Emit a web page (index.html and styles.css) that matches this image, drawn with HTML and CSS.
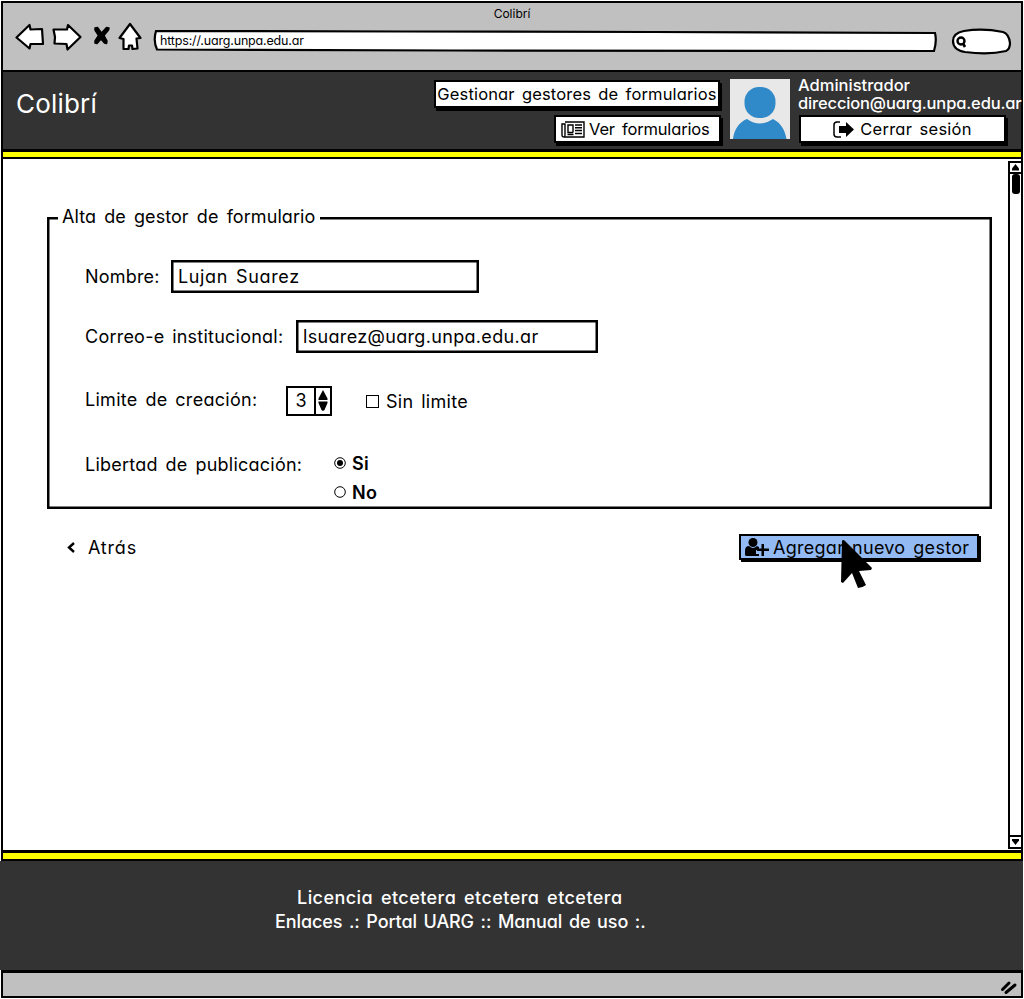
FILE: index.html
```html
<!DOCTYPE html>
<html lang="es">
<head>
<meta charset="utf-8">
<title>Colibrí</title>
<link rel="stylesheet" href="styles.css">
</head>
<body>
<div class="window">
  <div class="chrome">
    <div class="window-title"><span>Colibrí</span></div>
    <div class="toolbar">
      <svg class="nav-icons" width="128" height="30" viewBox="15 22 128 30" fill="#fff" stroke="#000" stroke-width="2.200" stroke-linejoin="round">
        <path d="M16.500 37.500L29.500 25L30.500 29.500L42 29L43 44L30.500 44L29.500 48.500Z"/>
        <path d="M53.500 29.500L67 29.500L68 25L80.500 37L67.500 49.500L66.500 44L54.500 43.500L55 37Z"/>
        <path d="M95 28L97.500 27.500L101.500 33L106.500 27.500L109 28L108.500 30L104 35.500L107 41L106.500 43.500L104.500 43L101 39L97 43.500L95 43L95 41L98.500 35.500L95 30Z" fill="#000" stroke-width="1.500"/>
        <path d="M130 24L140.500 38L136.500 38.500L137.500 48.500L132.500 49L132 45.500L129 45.500L128.500 49L123.500 49L123.500 39L119.500 38Z"/>
      </svg>
      <div class="address">
        <svg class="address-shape" width="785" height="24" viewBox="0 0 785 24" fill="#fff" stroke="#000" stroke-width="2.200"><path d="M3 2L250 2.500L500 3L782 4Q784 12 781 22L300 21.500L4 20.500Q0 12 3 2Z"/></svg>
        <span class="address-text">https://.uarg.unpa.edu.ar</span>
      </div>
      <svg class="search" width="62" height="27" viewBox="0 0 62 27" fill="#fff" stroke="#000" stroke-width="2.200">
        <path d="M13 3Q32 0 52 4Q58 6 59 15Q59 21 55 23Q38 27 14 24Q2 22 2 13Q2 5 13 3Z"/>
        <circle cx="10" cy="13" r="3.500" stroke-width="2.400"/><path d="M12 15.500L14 19" stroke-width="2.600"/>
      </svg>
    </div>
  </div>

  <header class="header">
    <h1 class="logo">Colibrí</h1>
    <nav class="nav">
      <a class="button button-manage"><span>Gestionar gestores de formularios</span></a>
      <a class="button button-forms">
        <svg width="24" height="17" viewBox="0 0 24 17" fill="none" stroke="#000" stroke-width="1.400"><path d="M4 1H23V16H3Q1 16 1 14V3H4V14Q4 16 3 16M12 11.500H7V4H12V11.500M14 4H21M14 6.800H21M14 9.500H21M6.500 13.500H12.500M14 12.500H21"/></svg>
        <span>Ver formularios</span>
      </a>
    </nav>
    <svg class="avatar" width="60" height="60" viewBox="0 0 60 60"><path fill="#e8e8e8" d="M0 0H60V60H0Z"/><rect x="14.500" y="8" width="31" height="31" rx="14.500" fill="#3089c9"/><path fill="#3089c9" d="M3 60C4 51 9 43 17 40Q30 49 43 40C51 44 55 51 56.500 60Z"/></svg>
    <div class="account">
      <div class="role">Administrador</div>
      <div class="mail">direccion@uarg.unpa.edu.ar</div>
      <a class="button button-exit">
        <svg width="22" height="17" viewBox="0 0 22 17"><path d="M7 1H4Q1 1 1 4V13Q1 16 4 16H8" fill="none" stroke="#000" stroke-width="1.500"/><path d="M6 5H13V1L21 8.500L13 16V12H6Z"/></svg>
        <span>Cerrar sesión</span>
      </a>
    </div>
  </header>
  <div class="stripe"></div>

  <div class="page">
    <main class="content">
      <section class="group">
        <h2 class="legend"><span>Alta de gestor de formulario</span></h2>
        <div class="row row-name"><label class="t-name">Nombre:</label><div class="field field-name"><span>Lujan Suarez</span></div></div>
        <div class="row row-mail"><label class="t-mail">Correo-e institucional:</label><div class="field field-mail"><span>lsuarez@uarg.unpa.edu.ar</span></div></div>
        <div class="row row-limit">
          <label class="t-limit">Limite de creación:</label>
          <div class="spinner"><span class="spinner-value">3</span><svg width="14" height="25" viewBox="0 0 14 25"><path d="M7 2L11.500 10.500V12H2.500V10.500ZM2.500 13.500H11.500V15L8.500 22L7 23L5.500 22L2.500 15Z"/></svg></div>
          <span class="checkbox"></span><span class="t-free">Sin limite</span>
        </div>
        <div class="row row-publish">
          <label class="t-publish">Libertad de publicación:</label>
          <div class="radios">
            <div class="radio"><svg width="12" height="12" viewBox="0 0 12 12"><circle cx="6" cy="6" r="5.300" fill="none" stroke="#000"/><circle cx="6" cy="6" r="3"/></svg><b>Si</b></div>
            <div class="radio"><svg width="12" height="12" viewBox="0 0 12 12"><circle cx="6" cy="6" r="5.300" fill="none" stroke="#000"/></svg><b>No</b></div>
          </div>
        </div>
      </section>
      <div class="actions">
        <a class="back"><svg width="8" height="11" viewBox="0 0 8 11" fill="none" stroke="#000" stroke-width="2.400"><path d="M7 1L2 5.500L7 10"/></svg><span>Atrás</span></a>
        <a class="button button-add">
          <svg width="26" height="20" viewBox="0 0 26 20"><circle cx="9" cy="5.500" r="4.500"/><path d="M1 18V14Q1 9 5 9Q9 13 13 9L15 10V13H12V17H15V19H3Q1 19 1 18ZM17.500 7H20V11.500H25V14H20V19H17.500V14H13V11.500H17.500Z"/></svg>
          <span>Agregar nuevo gestor</span>
          <svg class="pointer" width="34" height="50" viewBox="0 0 34 50"><path d="M2 2Q3 0 5 2L32 29L31 31L19 32L26 46Q22 49 18 49L12 34L3 44L1 43Z"/></svg>
        </a>
      </div>
    </main>
    <div class="scrollbar">
      <svg class="scroll-arrow" width="13" height="9" viewBox="0 0 13 9"><path d="M6.500 1L10 5.500V7.500H3V5.500Z"/></svg>
      <div class="track"><div class="thumb"></div></div>
      <svg class="scroll-arrow" width="13" height="10" viewBox="0 0 13 10"><path d="M3 2H10V3.500L6.500 8L3 3.500Z"/></svg>
    </div>
  </div>

  <div class="stripe stripe-bottom"></div>
  <footer class="footer">
    <p class="license">Licencia etcetera etcetera etcetera</p>
    <p class="links">Enlaces .: Portal UARG :: Manual de uso :.</p>
  </footer>
  <div class="status"><svg width="18" height="16" viewBox="0 0 18 16" stroke="#000" stroke-width="3" stroke-linecap="round"><path d="M2.500 9.500L9 3M6 12.500L15 5"/></svg></div>
</div>
</body>
</html>
```
FILE: styles.css
```css
* { box-sizing: border-box; }
body { margin: 0; background: #fff; color: #000; font: 18px/20px Inter, "Open Sans", sans-serif; font-feature-settings: "cv11" 1; overflow: hidden; }
h1, h2, p { margin: 0; font-weight: 400; }
svg { display: block; flex: none; }
span, label, b, .role, .mail { white-space: nowrap; }

.window { width: 1022px; height: 997px; margin: 1px; border: 2px solid #000; display: flex; flex-direction: column; }
.chrome { height: 69px; flex: none; background: #c0c0c0; border-bottom: 2px solid #000; }
.window-title { height: 19px; padding-top: 2px; display: flex; justify-content: center; font-size: 12px; line-height: 18px; }
.toolbar { display: flex; align-items: flex-start; }
.nav-icons { margin-left: 12px; }
.address { display: grid; margin: 7px 0 0 10px; width: 785px; }
.address > * { grid-area: 1 / 1; }
.address-text { padding: 2px 0 0 7px; font-size: 12.500px; line-height: 20px; letter-spacing: -0.170px; }
.search { margin: 6px 0 0 13px; }

.header { height: 77px; flex: none; background: #333; display: flex; align-items: flex-start; padding-top: 7px; }
.logo { flex: 1; padding: 11px 0 0 13px; font-size: 26px; line-height: 28px; color: #fff; letter-spacing: 0.200px; }
.nav { display: flex; flex-direction: column; align-items: flex-end; gap: 7px; padding-top: 1px; width: 287px; }
.button { display: flex; align-items: center; justify-content: center; height: 28px; border: 2px solid #000; background: #fff; box-shadow: 2px 3px 0 #000; }
.header .button { font-size: 16.500px; word-spacing: 2.500px; }
.button-manage { width: 286px; margin-right: 1px; letter-spacing: 0.150px; }
.button-forms { width: 167px; justify-content: flex-start; padding-left: 5px; gap: 4px; letter-spacing: -0.150px; }
.avatar { margin-left: 9px; }
.account { width: 223px; margin: -3px 0 0 8px; color: #fff; font-size: 16.500px; font-weight: 500; line-height: 18px; }
.mail { letter-spacing: -0.150px; }
.button-exit { width: 207px; margin: 3px 0 0 1px; gap: 5px; color: #000; font-weight: 400; letter-spacing: 0.250px; }

.stripe { flex: none; height: 10px; background: #ff0; border: solid #000; border-width: 3px 0 2px; }
.stripe-bottom { height: 11px; }
.page { flex: 1; display: flex; min-height: 0; }
.content { flex: 1; padding: 58px 15px 0 44px; }
.group { width: 945px; height: 292px; border: 2px solid #000; box-shadow: inset 0 0 0 0.500px #000; }
.legend { margin: -12px 0 0 9px; font-size: 18px; line-height: 20px; word-spacing: 3px; letter-spacing: 0.070px; }
.legend span { display: inline-block; width: 262px; padding-left: 4px; background: #fff; }
.row { display: flex; align-items: center; padding-left: 36px; word-spacing: 2.500px; }
.row-name { margin-top: 33px; letter-spacing: 0.200px; }
.row-mail { margin-top: 27px; }
.row-limit { margin-top: 33px; height: 30px; }
.row-publish { margin-top: 36px; align-items: flex-start; }
.row-publish label { margin-top: 3px; }
.field { height: 33px; border: 2px solid #000; box-shadow: inset 0 0 0 0.500px #000; padding-left: 5px; line-height: 30px; }
.t-name { width: 86px; }
.t-mail { width: 211px; letter-spacing: 0.230px; }
.t-limit { width: 201px; letter-spacing: 0.280px; padding-bottom: 2px; }
.t-publish { width: 249px; letter-spacing: 0.240px; }
.t-free { padding-top: 1px; letter-spacing: 0.280px; }
.field-name { width: 308px; letter-spacing: 0.620px; }
.field-mail { width: 302px; letter-spacing: 0.330px; }
.spinner { display: flex; width: 46px; height: 30px; border: 2px solid #000; }
.spinner-value { width: 28px; border-right: 2px solid #000; text-align: center; line-height: 26px; }
.checkbox { width: 13px; height: 13px; border: 1px solid #000; margin: 0 7px 0 34px; }
.radio { display: flex; align-items: center; gap: 6px; height: 20px; margin: 1px 0 9px; }
.radio b { font-weight: 600; padding-top: 1px; letter-spacing: 0.400px; }

.actions { display: flex; justify-content: space-between; align-items: flex-start; padding: 24px 14px 0 20px; }
.back { display: flex; align-items: center; gap: 13px; height: 28px; letter-spacing: 0.800px; }
.back span { padding-top: 1px; }
.button-add { position: relative; width: 240px; height: 26px; justify-content: flex-start; padding-left: 3px; gap: 3px; background: #93baf2; word-spacing: 2.500px; letter-spacing: 0.280px; margin-top: 1px; box-shadow: 2px 2px 0 #000; }
.button-add span { padding-top: 1px; }
.pointer { position: absolute; left: 99px; top: 3px; }

.scrollbar { width: 13px; margin: 2px 0 1px; border-left: 2px solid #000; border-top: 2px solid #000; border-bottom: 2px solid #000; display: flex; flex-direction: column; overflow: hidden; }
.scroll-arrow { margin-left: -1px; }
.track { flex: 1; border: solid #000; border-width: 2px 0; }
.thumb { width: 8px; height: 20px; margin: 0 0 0 2px; border-radius: 3px; background: #000; }

.footer { height: 109px; flex: none; margin: 0 -2px 0 -3px; background: #333; color: #fff; padding-top: 25px; line-height: 24px; }
.license, .links { font-weight: 500; }
.license { padding-left: 297px; word-spacing: 2.500px; letter-spacing: 0.450px; }
.links { padding-left: 275px; word-spacing: 2px; letter-spacing: -0.110px; }
.status { height: 26px; flex: none; background: #c0c0c0; border-top: 3px solid #000; display: flex; justify-content: flex-end; padding: 7px 3px 0 0; }
```
